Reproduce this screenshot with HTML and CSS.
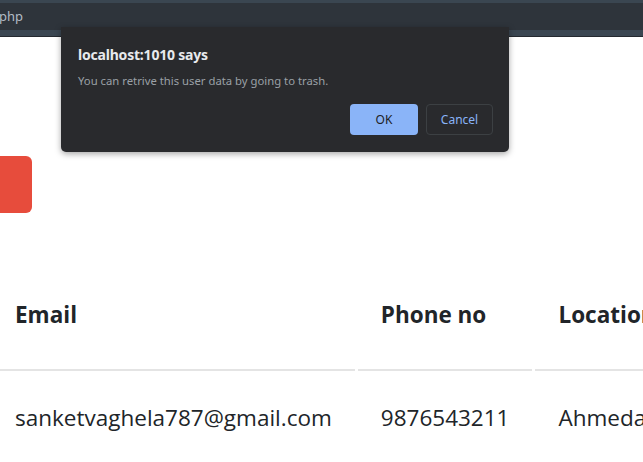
FILE: index.html
```html
<!DOCTYPE html>
<html>
<head>
<meta charset="utf-8">
<link rel="stylesheet" href="styles.css">
</head>
<body>
<div class="topbar"><span class="url">php</span></div>
<main class="page">
  <div class="red-btn"></div>
  <div class="table-wrap">
    <table class="users">
      <thead>
        <tr><th class="c1">Email</th><th class="c2">Phone no</th><th class="c3">Location</th></tr>
      </thead>
      <tbody>
        <tr><td>sanketvaghela787@gmail.com</td><td>9876543211</td><td>Ahmedabad</td></tr>
      </tbody>
    </table>
  </div>
</main>
<div class="dialog">
  <div class="dlg-title">localhost:1010 says</div>
  <div class="dlg-msg">You can retrive this user data by going to trash.</div>
  <div class="dlg-actions">
    <button class="btn-ok">OK</button>
    <button class="btn-cancel">Cancel</button>
  </div>
</div>
</body>
</html>
```
FILE: styles.css
```css
* { box-sizing: border-box; }
html, body { margin: 0; padding: 0; }
body {
  width: 643px;
  height: 462px;
  overflow: hidden;
  background: #ffffff;
  font-family: "Open Sans", "Noto Sans", sans-serif;
  color: #212529;
  position: relative;
}
.topbar {
  height: 36px;
  background: #2e343b;
  border-top: 3px solid #3a4651;
  border-bottom: 6px solid #3a4651;
  box-shadow: 0 1px 0 #24292f;
  display: flex;
  align-items: center;
}
.url {
  font-family: "Noto Sans", "Open Sans", sans-serif;
  font-size: 13px;
  color: #b3bcc5;
  margin-left: -1px;
  margin-top: -2px;
}
.page {
  padding-top: 120px;
}
.red-btn {
  width: 32px;
  height: 57px;
  background: #e74c3c;
  border-radius: 0 6px 6px 0;
}
.table-wrap {
  width: 643px;
  overflow: hidden;
}
.users {
  margin-top: 46px;
  margin-left: -11px;
  border-collapse: separate;
  border-spacing: 3px 0;
  font-size: 22.5px;
  line-height: 33px;
}
.users th, .users td {
  text-align: left;
  padding: 30px 23px 30px 23px;
  white-space: nowrap;
}
.users th {
  font-weight: 700;
  padding-top: 39px;
  padding-bottom: 38px;
  border-bottom: 2px solid #e4e4e4;
}
.users td {
  font-weight: 400;
  padding-top: 30px;
}
.c1 { width: 373px; }
.c2 { width: 176px; }
.dialog {
  position: absolute;
  left: 61px;
  top: 27px;
  width: 448px;
  height: 125px;
  background: #292a2d;
  border-radius: 0 0 5px 5px;
  box-shadow: 0 2px 6px rgba(0,0,0,0.35);
  padding: 19px 16px 0 17px;
  font-family: "Noto Sans", "Open Sans", sans-serif;
}
.dlg-title {
  color: #e8eaed;
  font-size: 14px;
  font-weight: 700;
  line-height: 18px;
  letter-spacing: -0.2px;
}
.dlg-msg {
  color: #9aa0a6;
  font-size: 11.3px;
  line-height: 16px;
  margin-top: 9px;
}
.dlg-actions {
  display: flex;
  justify-content: flex-end;
  gap: 8px;
  margin-top: 15px;
}
.dlg-actions button {
  font-family: "Noto Sans", "Open Sans", sans-serif;
  font-size: 12px;
  height: 31px;
  border-radius: 4px;
  padding: 0;
}
.btn-ok {
  width: 68px;
  background: #8ab4f8;
  color: #202124;
  border: none;
}
.btn-cancel {
  width: 67px;
  background: transparent;
  color: #8ab4f8;
  border: 1px solid #3c4043;
}
```
